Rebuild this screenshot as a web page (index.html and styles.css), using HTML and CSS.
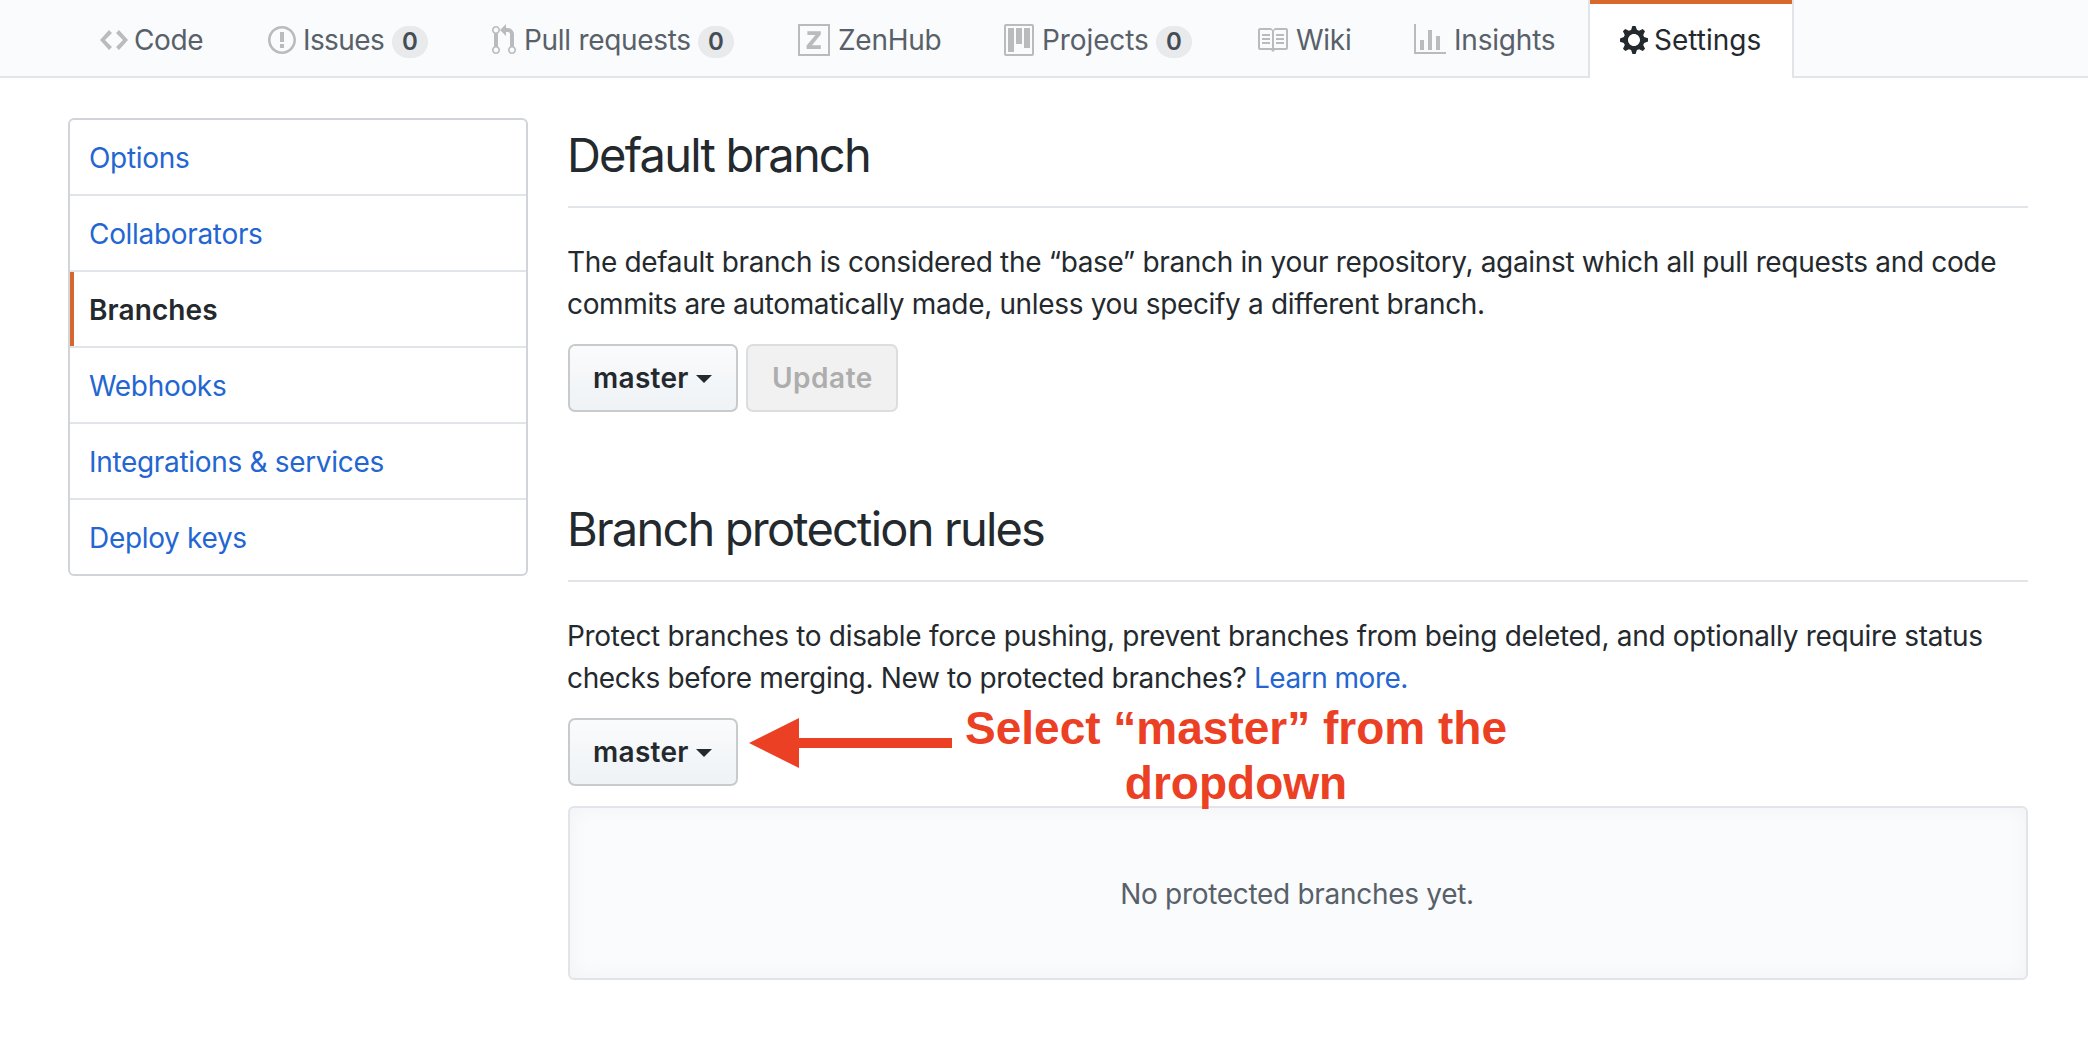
FILE: index.html
```html
<!DOCTYPE html>
<html lang="en">
<head>
<meta charset="utf-8">
<title>Branches settings</title>
<link rel="stylesheet" href="styles.css">
</head>
<body>
<nav class="tabs">
  <a class="tab"><svg class="icon" width="28" height="32" viewBox="0 0 14 16"><path fill-rule="evenodd" d="M9.5 3L8 4.5 11.5 8 8 11.5 9.5 13 14 8 9.5 3zm-5 0L0 8l4.500 5L6 11.500 2.500 8 6 4.500 4.500 3z"/></svg><span class="label code">Code</span></a>
  <a class="tab"><svg class="icon" width="28" height="32" viewBox="0 0 14 16"><path fill-rule="evenodd" d="M7 2.300c3.140 0 5.700 2.560 5.700 5.700s-2.560 5.700-5.700 5.700A5.710 5.710 0 0 1 1.300 8c0-3.140 2.560-5.700 5.700-5.700zM7 1C3.140 1 0 4.140 0 8s3.140 7 7 7 7-3.140 7-7-3.140-7-7-7zm1 3H6v5h2V4zm0 6H6v2h2v-2z"/></svg><span class="label issues">Issues</span><span class="counter">0</span></a>
  <a class="tab"><svg class="icon" width="24" height="32" viewBox="0 0 12 16"><path fill-rule="evenodd" d="M11 11.280V5c-.030-.780-.340-1.470-.940-2.060C9.460 2.350 8.780 2.030 8 2H7V0L4 3l3 3V4h1c.270.020.480.110.690.310.210.200.300.420.310.690v6.280A1.993 1.993 0 0 0 10 15a1.993 1.993 0 0 0 1-3.720zm-1 2.920c-.660 0-1.200-.550-1.200-1.200 0-.650.550-1.200 1.200-1.200.650 0 1.200.550 1.200 1.200 0 .650-.550 1.200-1.200 1.200zM4 3c0-1.110-.890-2-2-2a1.993 1.993 0 0 0-1 3.720v6.560A1.993 1.993 0 0 0 2 15a1.993 1.993 0 0 0 1-3.720V4.720c.590-.340 1-.980 1-1.720zm-.800 10c0 .660-.550 1.200-1.200 1.200-.650 0-1.200-.550-1.200-1.200 0-.650.550-1.200 1.200-1.200.650 0 1.200.550 1.200 1.200zM2 4.200C1.340 4.200.800 3.650.800 3c0-.650.550-1.200 1.200-1.200.650 0 1.200.550 1.200 1.200 0 .650-.550 1.200-1.200 1.200z"/></svg><span class="label pulls">Pull requests</span><span class="counter">0</span></a>
  <a class="tab"><svg class="icon" width="32" height="32" viewBox="0 0 16 16"><path fill-rule="evenodd" d="M0 0h16v16H0V0zm1 1v14h14V1H1zm3.700 2.600h6.700v1.700L7 10.600h4.400v1.900H4.300v-1.700l4.400-5.300h-4V3.600z"/></svg><span class="label zenhub">ZenHub</span></a>
  <a class="tab"><svg class="icon" width="30" height="32" viewBox="0 0 15 16"><path fill-rule="evenodd" d="M10 12h3V2h-3v10zm-4-2h3V2H6v8zm-4 4h3V2H2v12zm-1 1h13V1H1v14zM14 0H1a1 1 0 0 0-1 1v14a1 1 0 0 0 1 1h13a1 1 0 0 0 1-1V1a1 1 0 0 0-1-1z"/></svg><span class="label projects">Projects</span><span class="counter">0</span></a>
  <a class="tab"><svg class="icon" width="32" height="32" viewBox="0 0 16 16"><path fill-rule="evenodd" d="M3 5h4v1H3V5zm0 3h4V7H3v1zm0 2h4V9H3v1zm11-5h-4v1h4V5zm0 2h-4v1h4V7zm0 2h-4v1h4V9zm2-6v9c0 .550-.450 1-1 1H9.500l-1 1-1-1H2c-.550 0-1-.450-1-1V3c0-.550.450-1 1-1h5.500l1 1 1-1H15c.550 0 1 .450 1 1zm-8 .500L7.500 3H2v9h6V3.500zm7-.500H9.500l-.500.500V12h6V3z"/></svg><span class="label wiki">Wiki</span></a>
  <a class="tab"><svg class="icon" width="32" height="32" viewBox="0 0 16 16"><path fill-rule="evenodd" d="M16 14v1H0V0h1v14h15zM5 13H3V8h2v5zm4 0H7V3h2v10zm4 0h-2V6h2v7z"/></svg><span class="label insights">Insights</span></a>
  <a class="tab selected"><svg class="icon" width="28" height="32" viewBox="0 0 14 16"><path fill-rule="evenodd" d="M14 8.770v-1.600l-1.940-.640-.450-1.090.880-1.840-1.130-1.130-1.810.910-1.090-.450-.690-1.920h-1.600l-.630 1.940-1.110.450-1.840-.880-1.130 1.130.910 1.810-.450 1.090L0 7.230v1.590l1.940.640.450 1.090-.880 1.840 1.130 1.130 1.810-.910 1.090.450.690 1.920h1.590l.630-1.940 1.110-.450 1.840.880 1.130-1.130-.920-1.810.470-1.090L14 8.750v.020zM7 11c-1.660 0-3-1.340-3-3s1.340-3 3-3 3 1.340 3 3-1.340 3-3 3z"/></svg><span class="label settings">Settings</span></a>
</nav>
<div class="layout">
  <aside class="menu">
    <a class="menu-item">Options</a>
    <a class="menu-item">Collaborators</a>
    <a class="menu-item current">Branches</a>
    <a class="menu-item">Webhooks</a>
    <a class="menu-item">Integrations &amp; services</a>
    <a class="menu-item">Deploy keys</a>
  </aside>
  <main class="content">
    <section class="section">
      <h2 class="heading">Default branch</h2>
      <p class="text">The default branch is considered the “base” branch in your repository, against which all pull requests and code<br>commits are automatically made, unless you specify a different branch.</p>
      <div class="actions"><button class="btn"><span>master</span><i class="caret"></i></button><button class="btn disabled" disabled>Update</button></div>
    </section>
    <section class="section">
      <h2 class="heading">Branch protection rules</h2>
      <p class="text"><span class="lead">Protect branches to disable force pushing, prevent branches from being deleted, and optionally require status</span><br>checks before merging. New to protected branches? <a class="link">Learn more.</a></p>
      <div class="actions">
        <button class="btn"><span>master</span><i class="caret"></i></button>
        <svg class="arrow" width="204" height="50" viewBox="0 0 204 50"><path d="M0 25L50 0v20h153v10H50v20z"/></svg>
        <div class="note">Select “master” from the<br>dropdown</div>
      </div>
      <div class="blank">No protected branches yet.</div>
    </section>
  </main>
</div>
</body>
</html>
```
FILE: styles.css
```css
* { box-sizing: border-box; }
body {
  min-height: 1052px;
  margin: 0;
  background: #fff;
  color: #24292e;
  font: 28px/42px Inter, "Liberation Sans", sans-serif;
}
.tabs {
  display: grid;
  grid-template-columns: 168px 224px 306px 206px 252px 158px 206px 206px;
  height: 78px;
  padding-left: 68px;
  background: #fafbfc;
  border-bottom: 2px solid #e1e4e8;
}
.tab {
  display: flex;
  align-items: center;
  height: 78px;
  padding: 6px 0 4px 32px;
  color: #586069;
  white-space: nowrap;
}
.icon { flex: none; fill: #b9bbbd; margin-right: 7px; }
.label { letter-spacing: -.25px; }
.code { margin-left: -1px; letter-spacing: -.4px; }
.issues { letter-spacing: -.6px; }
.pulls { margin-left: 1px; letter-spacing: -.3px; }
.zenhub { margin-left: 1px; }
.projects { margin-left: 1px; letter-spacing: -.1px; }
.wiki { margin-left: 1px; }
.insights { margin-left: 1px; letter-spacing: -.2px; }
.settings { margin-left: -1px; letter-spacing: 0; }
.counter {
  width: 36px;
  height: 32px;
  margin: 4px 0 0 auto;
  border-radius: 40px;
  background: #e8eaeb;
  color: #444d56;
  font-size: 24px;
  font-weight: 600;
  line-height: 32px;
  text-align: center;
}
.tab:has(.counter) { padding-right: 32px; }
.selected {
  padding: 6px 0 4px 30px;
  background: linear-gradient(#d9682d, #d9682d) top / 100% 4px no-repeat #fff;
  color: #24292e;
  border: 0 solid #e1e4e8;
  border-width: 0 2px;
}
.selected .icon { fill: #24292e; }
.layout {
  display: grid;
  grid-template-columns: 460px 1460px;
  column-gap: 40px;
  align-items: start;
  padding: 40px 60px 72px 68px;
}
.menu {
  border: 2px solid #d1d5da;
  border-radius: 6px;
  overflow: hidden;
}
.menu-item {
  display: block;
  height: 76px;
  padding: 17px 19px 15px;
  border-bottom: 2px solid #e1e4e8;
  color: #2366d1;
  letter-spacing: -.32px;
}
.menu-item:last-child { height: 74px; border-bottom: 0; }
.current {
  color: #24292e;
  font-weight: 600;
  letter-spacing: .1px;
  background: linear-gradient(#d5682f, #d5682f) left / 4px 100% no-repeat;
}
.section + .section { margin-top: 80px; }
.heading {
  height: 90px;
  margin: 0 0 32px;
  padding-top: 1px;
  border-bottom: 2px solid #e1e4e8;
  font-size: 47px;
  font-weight: 400;
  line-height: 72px;
  letter-spacing: -1.8px;
  text-indent: -1px;
}
.text {
  margin: 0;
  padding: 1px 0 19px;
  margin-left: -1px;
  letter-spacing: -.34px;
  white-space: nowrap;
}
.lead { letter-spacing: -.31px; }
.link { color: #2366d1; letter-spacing: -.5px; }
.actions { position: relative; display: flex; gap: 8px; height: 68px; }
.btn {
  display: flex;
  align-items: center;
  gap: 7px;
  width: 170px;
  height: 68px;
  padding: 0 0 0 23px;
  border: 2px solid #c8cbce;
  border-radius: 7px;
  background: linear-gradient(#fafbfc, #eff3f6 95%);
  color: #24292e;
  font: 600 28px/40px Inter, "Liberation Sans", sans-serif;
  letter-spacing: .3px;
}
.caret {
  margin-top: 2px;
  border: 8px solid transparent;
  border-top-color: #24292e;
  border-bottom: 0;
}
.disabled {
  width: 152px;
  padding-left: 24px;
  border-color: #dcddde;
  background: #f1f1f1;
  color: #adadad;
  letter-spacing: .5px;
}
.arrow { position: absolute; left: 181px; top: 0; fill: #ec4024; }
.note {
  position: absolute;
  left: 368px;
  top: -17px;
  width: 600px;
  color: #ec4024;
  font: bold 46px/55px "Liberation Sans", Arial, sans-serif;
  text-align: center;
  white-space: nowrap;
}
.blank {
  height: 174px;
  margin-top: 20px;
  padding-right: 2px;
  border: 2px solid #e1e4e8;
  border-radius: 6px;
  background: #fafbfc;
  box-shadow: inset 0 0 20px rgba(27, 31, 35, .04);
  color: #586069;
  line-height: 172px;
  letter-spacing: -.3px;
  text-align: center;
}
```
